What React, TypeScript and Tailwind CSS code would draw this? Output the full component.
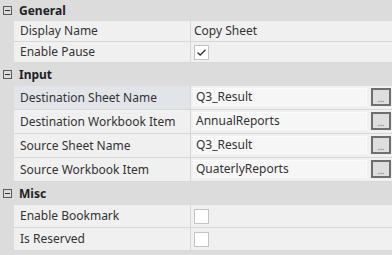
type Prop = {
    label: string;
    kind: "text" | "check" | "browse";
    value?: string;
    checked?: boolean;
    selected?: boolean;
};

const sections: { title: string; headerH: string; rowH: string; rows: Prop[] }[] = [
    {
        title: "General",
        headerH: "h-[21px]",
        rowH: "h-[21px]",
        rows: [
            { label: "Display Name", kind: "text", value: "Copy Sheet" },
            { label: "Enable Pause", kind: "check", checked: true },
        ],
    },
    {
        title: "Input",
        headerH: "h-[23px]",
        rowH: "h-[24px]",
        rows: [
            { label: "Destination Sheet Name", kind: "browse", value: "Q3_Result", selected: true },
            { label: "Destination Workbook Item", kind: "browse", value: "AnnualReports" },
            { label: "Source Sheet Name", kind: "browse", value: "Q3_Result" },
            { label: "Source Workbook Item", kind: "browse", value: "QuaterlyReports" },
        ],
    },
    {
        title: "Misc",
        headerH: "h-[23px]",
        rowH: "h-[23px]",
        rows: [
            { label: "Enable Bookmark", kind: "check" },
            { label: "Is Reserved", kind: "check" },
        ],
    },
];

function Collapse() {
    return (
        <div className="w-[9px] h-[9px] border border-[#5a5a5a] flex items-center justify-center">
            <div className="w-[5px] h-px bg-[#333]" />
        </div>
    );
}

function CheckBox({ checked }: { checked?: boolean }) {
    return (
        <div className="w-[15px] h-[15px] bg-white border border-[#c4c4c4] flex items-center justify-center">
            {checked && (
                <svg width="11" height="9" viewBox="0 0 11 9">
                    <path d="M1.5 4.5 L4.2 7 L9.5 1.8" fill="none" stroke="#333" strokeWidth="1.3" />
                </svg>
            )}
        </div>
    );
}

function Value({ p }: { p: Prop }) {
    if (p.kind === "check") {
        return (
            <div className="flex items-center pl-[3px]">
                <CheckBox checked={p.checked} />
            </div>
        );
    }
    if (p.kind === "browse") {
        return (
            <div className="flex-1 flex items-stretch pt-[2px] pb-[3px] pl-[2px] pr-[1px] gap-[4px]">
                <div className="flex-1 bg-[#f6f6f6] border border-[#fbfbfb] flex items-center pl-[2px]">
                    {p.value}
                </div>
                <div className="w-[20px] border-2 border-[#6e6e6e] bg-[#dedede] flex items-center justify-center text-[8px] leading-none text-[#555] pt-[3px]">
                    ...
                </div>
            </div>
        );
    }
    return <div className="flex items-center pl-[3px]">{p.value}</div>;
}

export default function App() {
    return (
        <div
            className="w-[392px] h-[255px] bg-[#dcdcdc] text-[12px] text-[#333] overflow-hidden"
            style={{ fontFamily: '"Noto Sans", "Open Sans", sans-serif' }}
        >
            {sections.map((s) => (
                <div key={s.title}>
                    <div className={`${s.headerH} flex items-center`}>
                        <div className="w-[14px] pl-[3px] flex items-center">
                            <Collapse />
                        </div>
                        <span className="pl-[5px] font-bold text-[#222]">{s.title}</span>
                    </div>
                    {s.rows.map((p) => (
                        <div key={p.label} className={`${s.rowH} flex`}>
                            <div className="w-[14px] shrink-0" />
                            <div
                                className={`w-[177px] shrink-0 flex items-center pl-[6px] border-b border-r border-[#d8d8d8] ${
                                    p.selected ? "bg-[#e1e4e9]" : "bg-[#f0f0f0]"
                                }`}
                            >
                                {p.label}
                            </div>
                            <div className="flex-1 flex items-stretch bg-[#f0f0f0] border-b border-[#d8d8d8]">
                                <Value p={p} />
                            </div>
                        </div>
                    ))}
                </div>
            ))}
        </div>
    );
}
